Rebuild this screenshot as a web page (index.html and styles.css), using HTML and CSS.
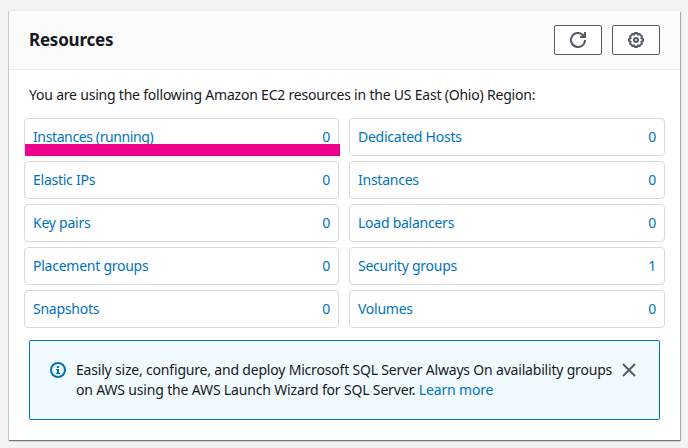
FILE: index.html
```html
<!DOCTYPE html>
<html lang="en">
<head>
<meta charset="utf-8">
<title>Resources</title>
<link rel="stylesheet" href="styles.css">
</head>
<body>
<section class="card">
  <header class="card-header">
    <h2>Resources</h2>
    <div class="actions">
      <button class="btn" aria-label="Refresh"><svg width="16" height="16" viewBox="0 0 16 16"><path d="M15 8a7 7 0 1 1-2.200-5.100L14 4.100M10 5h5V0"/><path class="solid" d="M11 5l4-4v4z"/></svg></button>
      <button class="btn" aria-label="Settings"><svg width="16" height="16" viewBox="0 0 16 16"><path d="M6.200 2.500 7 1h2l.8 1.500 1.700-.5 2.500 2.500-.5 1.700L15 7v2l-1.500.8.5 1.700-2.500 2.500-1.700-.5L9 15H7l-.8-1.500-1.700.5L2 11.500l.5-1.700L1 9V7l1.500-.8L2 4.500 4.500 2z"/><circle cx="8" cy="8" r="2"/></svg></button>
    </div>
  </header>
  <div class="card-body">
    <p class="intro">You are using the following Amazon EC2 resources in the US East (Ohio) Region:</p>
    <div class="grid">
      <a class="cell marked"><span class="snug">Instances (running)</span><span>0</span></a>
      <a class="cell"><span>Dedicated Hosts</span><span>0</span></a>
      <a class="cell"><span>Elastic IPs</span><span>0</span></a>
      <a class="cell"><span>Instances</span><span>0</span></a>
      <a class="cell"><span>Key pairs</span><span>0</span></a>
      <a class="cell"><span>Load balancers</span><span>0</span></a>
      <a class="cell"><span>Placement groups</span><span>0</span></a>
      <a class="cell"><span>Security groups</span><span>1</span></a>
      <a class="cell"><span>Snapshots</span><span>0</span></a>
      <a class="cell"><span>Volumes</span><span>0</span></a>
    </div>
    <div class="alert">
      <svg class="info" width="16" height="16" viewBox="0 0 16 16"><circle cx="8" cy="8" r="7"/><path d="M7 4h2v2H7zM6 7h3v4h1v1H6v-1h1V8H6z"/></svg>
      <p><span class="line1">Easily size, configure, and deploy Microsoft SQL Server Always On availability groups</span><br><span class="line2">on AWS using the AWS Launch Wizard for SQL Server. <a>Learn more</a></span></p>
      <svg class="close" width="14" height="14" viewBox="0 0 14 14"><path d="M1 1l12 12M13 1L1 13"/></svg>
    </div>
  </div>
</section>
</body>
</html>
```
FILE: styles.css
```css
* { box-sizing: border-box; }
body {
  margin: 0;
  padding: 11px 8px 8px 9px;
  height: 448px;
  overflow: hidden;
  background: #f2f3f3;
  color: #16191f;
  font: 14px/20px "Noto Sans", "Open Sans", sans-serif;
  letter-spacing: -0.25px;
}
.card {
  width: 671px;
  height: 429px;
  background: #fff;
  box-shadow: 0 1px 1px #687b82, 1px 1px 1px #aab7b8, -1px 0 0 #d5dbdb, 0 -1px 0 #eaeded;
}
.card-header {
  display: flex;
  align-items: center;
  justify-content: space-between;
  height: 59px;
  padding: 0 20px;
  background: #fafafa;
  border-bottom: 1px solid #eaeded;
}
h2 { margin: 0; font-size: 17px; line-height: 22px; letter-spacing: -0.22px; }
.actions { display: flex; gap: 10px; }
.btn {
  display: flex;
  align-items: center;
  justify-content: center;
  width: 48px;
  height: 30px;
  padding: 0;
  border: 1px solid #545b64;
  border-radius: 2px;
  background: #fff;
}
svg { flex: none; fill: none; stroke: #545b64; stroke-width: 2; }
.solid { fill: #545b64; stroke: none; }
.card-body { padding: 15px 20px 20px; }
p { margin: 0; white-space: nowrap; }
.intro { letter-spacing: -0.21px; }
.line1 { letter-spacing: -0.19px; }
.line2 { letter-spacing: -0.165px; }
.grid {
  display: grid;
  grid-template-columns: 315px 316px;
  grid-auto-rows: 38px;
  gap: 5px 10px;
  margin: 13px -5px 12px;
}
.cell {
  position: relative;
  display: flex;
  align-items: center;
  justify-content: space-between;
  padding: 0 8px;
  border: 1px solid #d5dbdb;
  border-radius: 4px;
  color: #0073bb;
}
.snug { letter-spacing: -0.38px; }
.marked::after {
  content: "";
  position: absolute;
  left: 0;
  right: -2px;
  bottom: -1px;
  height: 12px;
  background: #ec008c;
}
.alert {
  display: flex;
  align-items: flex-start;
  width: 631px;
  height: 80px;
  padding: 19px 20px;
  border: 1px solid #0073bb;
  border-radius: 2px;
  background: #f1faff;
}
.alert p { width: 536px; margin-left: 10px; }
.alert a { color: #0073bb; }
.info { margin-top: 2px; stroke: #0073bb; }
.info path { fill: #0073bb; stroke: none; }
.close { margin: 3px 0 0 10px; }
```
